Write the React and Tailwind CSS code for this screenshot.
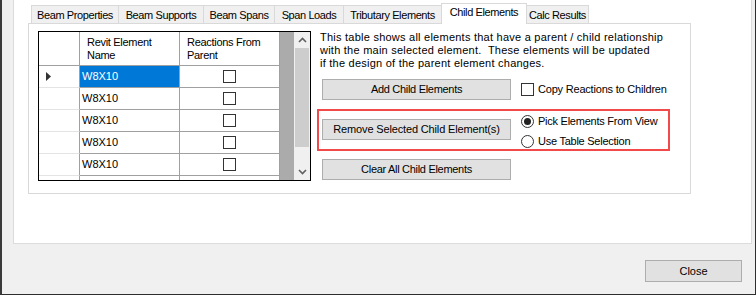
import React from "react";

const tabs = [
  { label: "Beam Properties", cls: "w-[87px]" },
  { label: "Beam Supports", cls: "w-[85px]" },
  { label: "Beam Spans", cls: "w-[71px]" },
  { label: "Span Loads", cls: "w-[69px]" },
  { label: "Tributary Elements", cls: "w-[98px]" },
];

function Box() {
  return <div className="w-[13px] h-[13px] border border-[#333333] bg-white shrink-0" />;
}

function Chevron({ up }) {
  return (
    <svg width="9" height="6" viewBox="0 0 9 6">
      <path
        d={up ? "M1 5 L4.5 1.5 L8 5" : "M1 1 L4.5 4.5 L8 1"}
        fill="none"
        stroke="#606060"
        strokeWidth="1.6"
      />
    </svg>
  );
}

function Row({ selected, empty }) {
  return (
    <div className="flex h-[22px] shrink-0">
      <div className="w-[41px] border-r border-r-[#a0a0a0] border-b border-b-[#e4e4e4] flex items-center pl-[7px]">
        {selected && (
          <svg width="5" height="9" viewBox="0 0 5 9">
            <path d="M0 0 L5 4.5 L0 9 Z" fill="#333333" />
          </svg>
        )}
      </div>
      <div
        className={
          "w-[100px] border-r border-r-[#a0a0a0] border-b border-b-[#a0a0a0] flex items-center pl-[2px] " +
          (selected ? "bg-[#0078d7] text-white" : "")
        }
      >
        {!empty && "W8X10"}
      </div>
      <div className="w-[100px] border-r border-r-[#a0a0a0] border-b border-b-[#a0a0a0] flex items-center justify-center">
        {!empty && <Box />}
      </div>
    </div>
  );
}

function Btn({ children, cls }) {
  return (
    <div
      className={
        "h-[21px] border border-[#adadad] bg-[#e1e1e1] flex items-center justify-center shrink-0 " +
        cls
      }
    >
      {children}
    </div>
  );
}

function Radio({ checked, label }) {
  return (
    <div className="flex items-center h-[13px]">
      <div className="w-[13px] h-[13px] rounded-full border border-[#333333] bg-white flex items-center justify-center shrink-0">
        {checked && <div className="w-[7px] h-[7px] rounded-full bg-[#222222]" />}
      </div>
      <span className="ml-[4px] tracking-[-0.25px] whitespace-nowrap">{label}</span>
    </div>
  );
}

export default function App() {
  return (
    <div className="w-[756px] h-[295px] bg-[#f0f0f0] border-l-2 border-l-[#3a3a3a] border-r border-r-[#2e2e2e] border-b border-b-[#2e2e2e] flex flex-col text-[11px] text-black font-['Liberation_Sans',Arial,sans-serif] overflow-hidden">
      <div className="ml-[11px] w-[739px] h-[244px] shrink-0 bg-white border-x border-b border-[#dcdcdc] pl-[14px]">
        <div className="w-[663px]">
          {/* tab headers */}
          <div className="flex items-end h-[20px] mt-[3px] pl-[3px]">
            {tabs.map((t) => (
              <div
                key={t.label}
                className={
                  "h-[18px] border-l border-t border-[#d9d9d9] bg-[#f0f0f0] text-center leading-[18px] tracking-[-0.4px] whitespace-nowrap " +
                  t.cls
                }
              >
                {t.label}
              </div>
            ))}
            <div className="relative z-10 -mb-px w-[86px] h-[21px] border-x border-t border-[#d9d9d9] bg-white text-center leading-[13px] pt-[2px] tracking-[-0.4px] whitespace-nowrap">
              Child Elements
            </div>
            <div className="w-[62px] h-[18px] border-r border-t border-[#d9d9d9] bg-[#f0f0f0] text-center leading-[18px] tracking-[-0.4px] whitespace-nowrap">
              Calc Results
            </div>
          </div>

          {/* tab page */}
          <div className="h-[171px] border border-[#d9d9d9] flex pl-[9px] pt-[7px]">
            {/* grid */}
            <div className="w-[273px] h-[150px] border border-black flex shrink-0 bg-white">
              <div className="w-[241px] flex flex-col overflow-hidden">
                <div className="flex h-[34px] shrink-0 border-b border-[#a0a0a0] leading-[13px] tracking-[-0.3px]">
                  <div className="w-[41px] border-r border-[#a0a0a0]" />
                  <div className="w-[100px] border-r border-[#a0a0a0] pl-[7px] pt-[4px]">
                    Revit Element
                    <br />
                    Name
                  </div>
                  <div className="w-[100px] border-r border-[#a0a0a0] pl-[7px] pt-[4px]">
                    Reactions From
                    <br />
                    Parent
                  </div>
                </div>
                <Row selected />
                <Row />
                <Row />
                <Row />
                <Row />
                <Row empty />
              </div>
              <div className="w-[14px] bg-[#ababab]" />
              <div className="w-[16px] bg-[#f0f0f0] flex flex-col">
                <div className="h-[16px] flex items-center justify-center">
                  <Chevron up />
                </div>
                <div className="h-[99px] mx-px bg-[#cdcdcd]" />
                <div className="flex-1" />
                <div className="h-[16px] flex items-center justify-center">
                  <Chevron />
                </div>
              </div>
            </div>

            {/* right section */}
            <div className="ml-[6px] flex flex-col">
              <div className="pl-[3px] h-[39px] leading-[13px] tracking-[0.24px] whitespace-pre">
                This table shows all elements that have a parent / child relationship
                <br />
                with the main selected element.  These elements will be updated
                <br />
                if the design of the parent element changes.
              </div>
              <div className="mt-[9px] flex items-center pl-[5px]">
                <Btn cls="w-[189px] tracking-[-0.3px]">Add Child Elements</Btn>
                <div className="ml-[10px]">
                  <Box />
                </div>
                <span className="ml-[4px] tracking-[-0.2px] whitespace-nowrap">
                  Copy Reactions to Children
                </span>
              </div>
              <div className="mt-[9px] w-[353px] h-[42px] border-2 border-[#f24a4a] flex items-start pl-[3px]">
                <div className="mt-[8px]">
                  <Btn cls="w-[189px] tracking-[-0.15px]">Remove Selected Child Element(s)</Btn>
                </div>
                <div className="ml-[10px] mt-[4px] flex flex-col gap-[7px]">
                  <Radio checked label="Pick Elements From View" />
                  <Radio label="Use Table Selection" />
                </div>
              </div>
              <div className="mt-[8px] pl-[5px]">
                <Btn cls="w-[189px] tracking-[-0.3px]">Clear All Child Elements</Btn>
              </div>
            </div>
          </div>
        </div>
      </div>
      <div className="flex justify-end pr-[13px] pt-[16px]">
        <Btn cls="w-[97px] h-[22px]">Close</Btn>
      </div>
    </div>
  );
}
